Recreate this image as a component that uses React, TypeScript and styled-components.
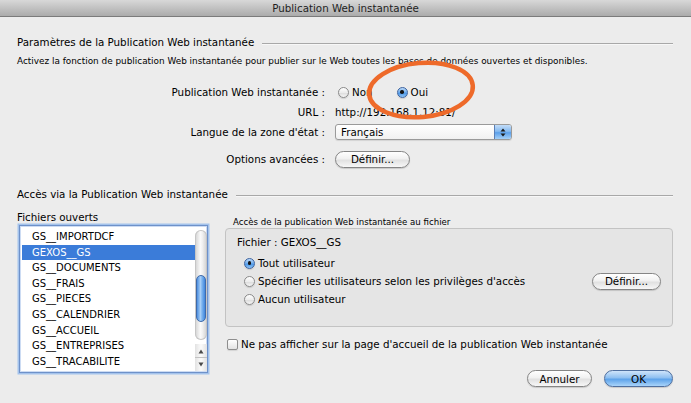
import React from 'react';
import styled, { createGlobalStyle } from 'styled-components';

const GlobalStyle = createGlobalStyle`
  html, body {
    margin: 0;
    padding: 0;
    background: #ececec;
  }
`;

const Window = styled.div`
  position: relative;
  width: 691px;
  height: 403px;
  overflow: hidden;
  background: #ececec;
  font-family: "DejaVu Sans", "Liberation Sans", sans-serif;
  font-size: 10.3px;
  color: #000;
`;

const TitleBar = styled.div`
  height: 16px;
  border-bottom: 1px solid #7b7b7b;
  background: linear-gradient(#d8d8d8, #ababab);
  display: flex;
  align-items: center;
  justify-content: center;
  color: #1e1e1e;
`;

const Body = styled.div`
  padding: 18px 18px 0 17px;
`;

const SectionHeading = styled.div<{ $space?: number }>`
  display: flex;
  align-items: center;
  gap: 8px;
  height: 14px;
  margin-top: ${(p) => p.$space ?? 0}px;
  white-space: nowrap;

  &::after {
    content: '';
    flex: 1;
    height: 1px;
    margin-top: 3px;
    background: #a8a8a8;
    border-bottom: 1px solid #f7f7f7;
  }
`;

const Description = styled.div`
  margin-top: 6px;
  height: 12px;
  line-height: 12px;
  font-size: 8.9px;
  white-space: nowrap;
`;

const FormGrid = styled.div`
  display: grid;
  grid-template-columns: 308px 1fr;
  grid-template-rows: 20px 20px 20px 34px;
  column-gap: 10px;
  align-items: center;
  margin-top: 15px;
`;

const FieldLabel = styled.div`
  text-align: right;
  white-space: nowrap;
`;

const Inline = styled.div<{ $gap?: number; $indent?: number }>`
  display: flex;
  align-items: center;
  gap: ${(p) => p.$gap ?? 0}px;
  margin-left: ${(p) => p.$indent ?? 0}px;
`;

const RadioItem = styled.label`
  display: flex;
  align-items: center;
  gap: 3px;
  white-space: nowrap;
`;

const RadioCircle = styled.span<{ $checked?: boolean }>`
  box-sizing: border-box;
  width: 11px;
  height: 11px;
  border-radius: 50%;
  flex: none;
  display: inline-flex;
  align-items: center;
  justify-content: center;
  border: 1px solid ${(p) => (p.$checked ? '#3d63a0' : '#8a8a8a')};
  background: ${(p) =>
    p.$checked
      ? 'linear-gradient(#b9d8f8 0%, #79b2ee 45%, #4b96e6 55%, #8fc4f6 100%)'
      : 'linear-gradient(#ffffff 0%, #ececec 50%, #dcdcdc 55%, #f6f6f6 100%)'};
  box-shadow: 0 1px 1px rgba(0, 0, 0, 0.12);

  &::after {
    content: '';
    display: ${(p) => (p.$checked ? 'block' : 'none')};
    width: 3.5px;
    height: 3.5px;
    border-radius: 50%;
    background: #141414;
  }
`;

const Select = styled.div`
  box-sizing: border-box;
  width: 177px;
  height: 16px;
  border: 1px solid #9a9a9a;
  border-radius: 3px;
  background: linear-gradient(#ffffff, #f1f1f1);
  display: flex;
  align-items: center;
  box-shadow: 0 1px 1px rgba(0, 0, 0, 0.1);
`;

const SelectValue = styled.span`
  flex: 1;
  padding-left: 5px;
`;

const Stepper = styled.span`
  width: 16px;
  height: 100%;
  border-left: 1px solid #5a7fb6;
  border-radius: 0 2px 2px 0;
  background: linear-gradient(#c3ddf8 0%, #86baf0 45%, #5ba0ea 55%, #a5d0f8 100%);
  display: flex;
  align-items: center;
  justify-content: center;
`;

const PushButton = styled.button<{ $width: number; $default?: boolean }>`
  box-sizing: border-box;
  width: ${(p) => p.$width}px;
  height: 17px;
  padding: 0;
  border-radius: 9px;
  font-family: inherit;
  font-size: 10.3px;
  color: #000;
  border: 1px solid ${(p) => (p.$default ? '#4f6f9f' : '#858585')};
  background: ${(p) =>
    p.$default
      ? 'linear-gradient(#cfe4fa 0%, #8fc0f1 45%, #5ea3ea 55%, #a9d4fa 100%)'
      : 'linear-gradient(#ffffff 0%, #f1f1f1 45%, #e1e1e1 55%, #f7f7f7 100%)'};
  box-shadow: 0 1px 1px rgba(0, 0, 0, 0.15);
`;

const Lower = styled.div`
  display: flex;
  gap: 17px;
  margin-top: 9px;
`;

const LeftColumn = styled.div`
  width: 191px;
  display: flex;
  flex-direction: column;
`;

const ColumnTitle = styled.div`
  height: 14px;
  line-height: 14px;
`;

const ListBox = styled.div`
  box-sizing: border-box;
  margin: 1px 0 0 2px;
  width: 189px;
  height: 148px;
  border: 1px solid #6e91c9;
  box-shadow: 0 0 0 1.5px #a4c3ec, inset 0 0 0 1px #cddcf3;
  background: #fff;
  display: flex;
  padding: 3px 0 0 2px;
`;

const Items = styled.div`
  flex: 1;
`;

const Item = styled.div<{ $selected?: boolean }>`
  height: 15.6px;
  line-height: 15.6px;
  padding-left: 10px;
  font-size: 10px;
  white-space: nowrap;
  background: ${(p) => (p.$selected ? '#3b7cd9' : 'transparent')};
  color: ${(p) => (p.$selected ? '#fff' : '#000')};
`;

const ScrollBar = styled.div`
  width: 12px;
  display: flex;
  flex-direction: column;
  margin-top: 1px;
  margin-bottom: 1px;
`;

const Track = styled.div`
  height: 112px;
  border-radius: 6px;
  background: linear-gradient(90deg, #d0d0d0, #fafafa 45%, #f2f2f2 60%, #cfcfcf);
  box-shadow: inset 0 0 0 1px #c6c6c6;
  padding-top: 45px;
  box-sizing: border-box;
`;

const Thumb = styled.div`
  margin: 0 1px;
  height: 47px;
  border-radius: 5px;
  border: 1px solid #3f6aa9;
  box-sizing: border-box;
  background: linear-gradient(90deg, #4d8fe0, #a9d0f7 45%, #7fb6f0 60%, #3f86dd);
`;

const ArrowButton = styled.div<{ $divider?: boolean; $space?: number }>`
  height: 13px;
  margin-top: ${(p) => p.$space ?? 0}px;
  display: flex;
  align-items: center;
  justify-content: center;
  background: linear-gradient(90deg, #e2e2e2, #fbfbfb 50%, #e2e2e2);
  border-top: 1px solid ${(p) => (p.$divider ? '#c2c2c2' : 'transparent')};
`;

const RightColumn = styled.div`
  width: 449px;
  padding-top: 6px;
  display: flex;
  flex-direction: column;
`;

const GroupLabel = styled.div`
  height: 12px;
  line-height: 12px;
  padding-left: 8px;
  font-size: 8.6px;
  white-space: nowrap;
`;

const GroupBox = styled.div`
  box-sizing: border-box;
  width: 448px;
  height: 99px;
  border: 1px solid #c3c3c3;
  border-radius: 4px;
  background: #e5e5e5;
  padding: 6px 11px 0 11px;
`;

const FileLine = styled.div`
  height: 14px;
  line-height: 14px;
`;

const RadioList = styled.div`
  margin-top: 5px;
  padding-left: 7px;
  display: flex;
  flex-direction: column;
`;

const RadioRow = styled.div`
  height: 18px;
  display: flex;
  align-items: center;
  justify-content: space-between;
`;

const CheckRow = styled.label`
  margin-top: 10px;
  height: 14px;
  padding-left: 2px;
  display: flex;
  align-items: center;
  gap: 3px;
  white-space: nowrap;
`;

const CheckBox = styled.span`
  box-sizing: border-box;
  width: 11px;
  height: 11px;
  border: 1px solid #8e8e8e;
  border-radius: 2px;
  background: linear-gradient(#ffffff, #e3e3e3);
  box-shadow: 0 1px 1px rgba(0, 0, 0, 0.1);
`;

const Actions = styled.div`
  margin-top: 19px;
  display: flex;
  justify-content: flex-end;
  gap: 12px;
`;

const Annotation = styled.svg`
  position: absolute;
  left: 364px;
  top: 58px;
  pointer-events: none;
`;

const files = [
  'GS__IMPORTDCF',
  'GEXOS__GS',
  'GS__DOCUMENTS',
  'GS__FRAIS',
  'GS__PIECES',
  'GS__CALENDRIER',
  'GS__ACCUEIL',
  'GS__ENTREPRISES',
  'GS__TRACABILITE',
];

function UpDown() {
  return (
    <svg width="6" height="9" viewBox="0 0 6 9">
      <path d="M3 0.5 L5.5 3.5 H0.5 Z" fill="#1b1b1b" />
      <path d="M3 8.5 L5.5 5.5 H0.5 Z" fill="#1b1b1b" />
    </svg>
  );
}

function Arrow({ up }: { up?: boolean }) {
  return (
    <svg width="6" height="5" viewBox="0 0 6 5">
      <path d={up ? 'M3 0.5 L5.5 4.5 H0.5 Z' : 'M3 4.5 L5.5 0.5 H0.5 Z'} fill="#4a4a4a" />
    </svg>
  );
}

export default function App() {
  return (
    <>
      <GlobalStyle />
      <Window>
        <TitleBar>Publication Web instantanée</TitleBar>
        <Body>
          <SectionHeading>Paramètres de la Publication Web instantanée</SectionHeading>
          <Description>
            Activez la fonction de publication Web instantanée pour publier sur le Web toutes les bases de données
            ouvertes et disponibles.
          </Description>

          <FormGrid>
            <FieldLabel>Publication Web instantanée :</FieldLabel>
            <Inline $gap={24} $indent={3}>
              <RadioItem>
                <RadioCircle />
                Non
              </RadioItem>
              <RadioItem>
                <RadioCircle $checked />
                Oui
              </RadioItem>
            </Inline>

            <FieldLabel>URL :</FieldLabel>
            <div>http://192.168.1.12:81/</div>

            <FieldLabel>Langue de la zone d'état :</FieldLabel>
            <Select>
              <SelectValue>Français</SelectValue>
              <Stepper>
                <UpDown />
              </Stepper>
            </Select>

            <FieldLabel>Options avancées :</FieldLabel>
            <PushButton $width={75}>Définir...</PushButton>
          </FormGrid>

          <SectionHeading $space={11}>Accès via la Publication Web instantanée</SectionHeading>

          <Lower>
            <LeftColumn>
              <ColumnTitle>Fichiers ouverts</ColumnTitle>
              <ListBox>
                <Items>
                  {files.map((f) => (
                    <Item key={f} $selected={f === 'GEXOS__GS'}>
                      {f}
                    </Item>
                  ))}
                </Items>
                <ScrollBar>
                  <Track>
                    <Thumb />
                  </Track>
                  <ArrowButton $space={4}>
                    <Arrow up />
                  </ArrowButton>
                  <ArrowButton $divider>
                    <Arrow />
                  </ArrowButton>
                </ScrollBar>
              </ListBox>
            </LeftColumn>

            <RightColumn>
              <GroupLabel>Accès de la publication Web instantanée au fichier</GroupLabel>
              <GroupBox>
                <FileLine>Fichier : GEXOS__GS</FileLine>
                <RadioList>
                  <RadioRow>
                    <RadioItem>
                      <RadioCircle $checked />
                      Tout utilisateur
                    </RadioItem>
                  </RadioRow>
                  <RadioRow>
                    <RadioItem>
                      <RadioCircle />
                      Spécifier les utilisateurs selon les privilèges d'accès
                    </RadioItem>
                    <PushButton $width={69}>Définir...</PushButton>
                  </RadioRow>
                  <RadioRow>
                    <RadioItem>
                      <RadioCircle />
                      Aucun utilisateur
                    </RadioItem>
                  </RadioRow>
                </RadioList>
              </GroupBox>
              <CheckRow>
                <CheckBox />
                Ne pas afficher sur la page d'accueil de la publication Web instantanée
              </CheckRow>
              <Actions>
                <PushButton $width={65}>Annuler</PushButton>
                <PushButton $width={69} $default>
                  OK
                </PushButton>
              </Actions>
            </RightColumn>
          </Lower>
        </Body>

        <Annotation width="116" height="66" viewBox="0 0 116 66">
          <ellipse
            cx="57"
            cy="32"
            rx="52"
            ry="27"
            transform="rotate(-5 57 32)"
            fill="none"
            stroke="#ee6a2a"
            strokeWidth="4.5"
          />
        </Annotation>
      </Window>
    </>
  );
}
